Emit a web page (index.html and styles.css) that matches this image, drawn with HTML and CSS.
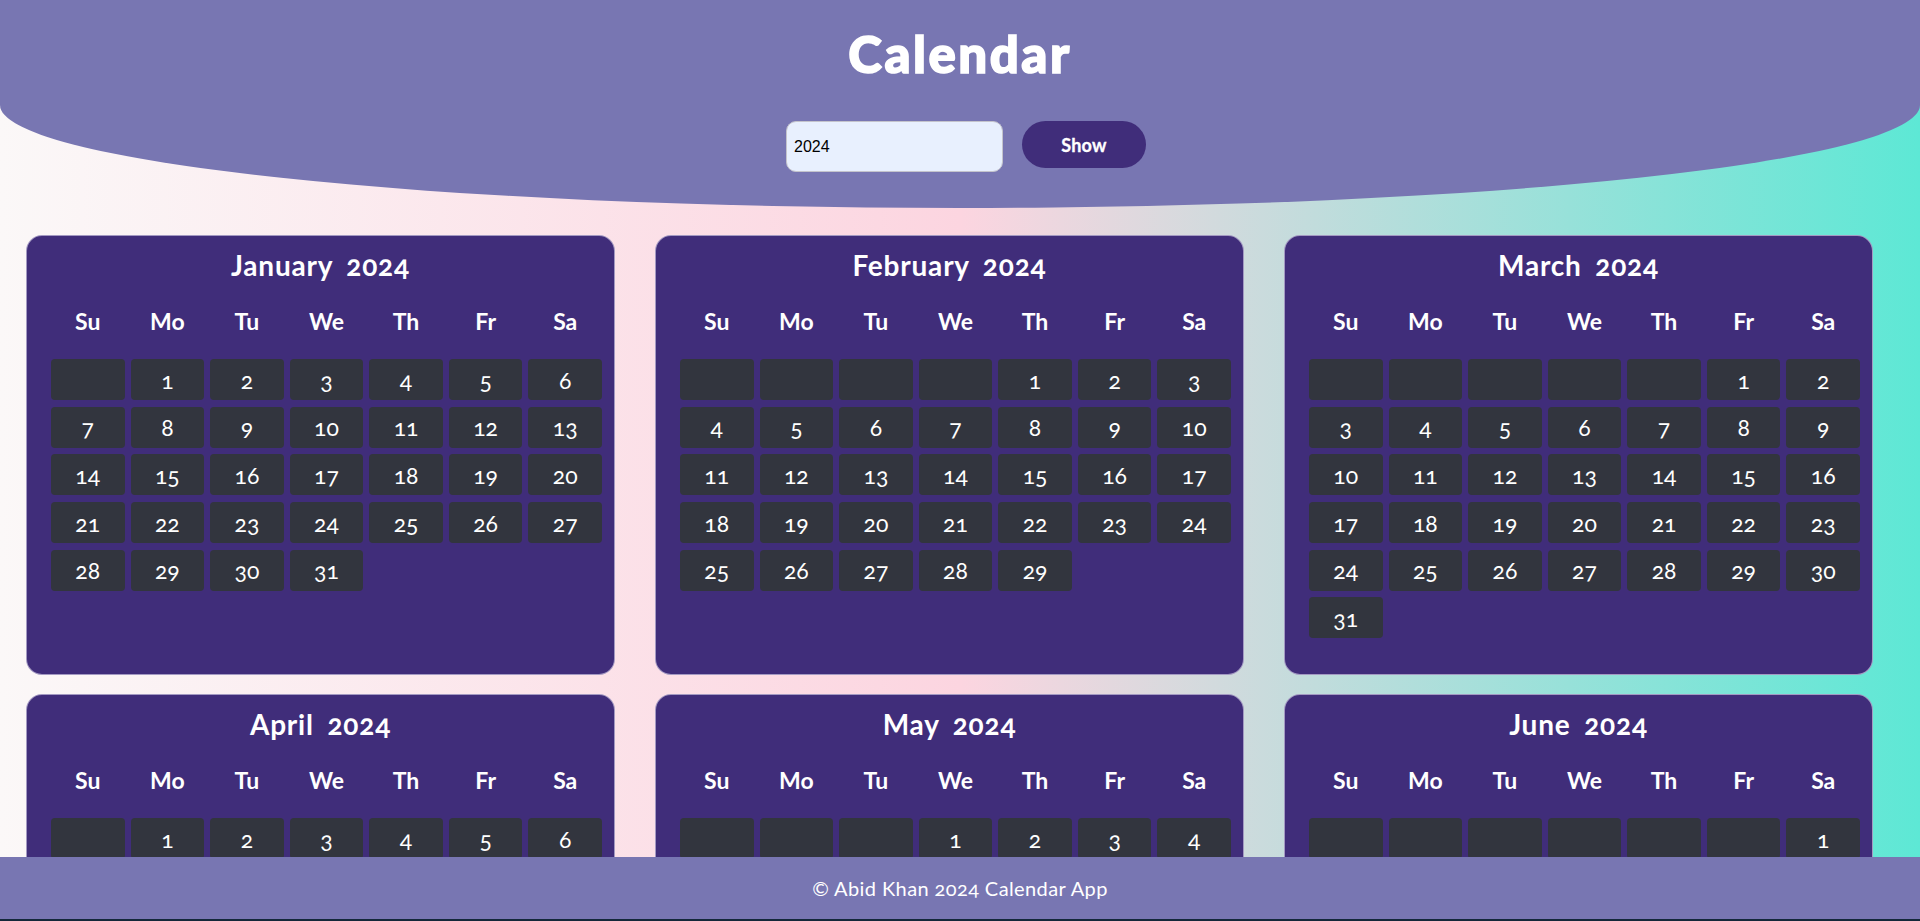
FILE: index.html
```html
<!DOCTYPE html>
<html lang="en">
<head>
<meta charset="UTF-8">
<title>Calendar</title>
<link rel="stylesheet" href="styles.css">
</head>
<body>
<header class="top">
  <h1 class="top-title">Calendar</h1>
  <div class="controls">
    <input class="year-input" id="year" type="number" value="2024">
    <button class="show-btn" id="show" type="button">Show</button>
  </div>
</header>
<main class="months" id="calendars"></main>
<footer class="foot">© Abid Khan 2024 Calendar App</footer>
<script src="script.js"></script>
</body>
</html>
```
FILE: styles.css
```css
html {
  scrollbar-width: none;
}
html::-webkit-scrollbar {
  display: none;
}
body {
  margin: 0;
  font-family: "Lato", "Open Sans", sans-serif;
  color: #fff;
  background: linear-gradient(to right, #fbf8f8 0%, #fcd5e0 50%, #5de8d5 100%);
  min-height: 100vh;
  padding-bottom: 80px;
}
.top {
  background: #7876b2;
  height: 208px;
  box-sizing: border-box;
  padding-top: 24px;
  border-radius: 0 0 50% 50% / 0 0 103px 103px;
  display: flex;
  flex-direction: column;
  align-items: center;
}
.top-title {
  margin: 0;
  font-size: 51px;
  line-height: 60px;
  font-weight: 900;
  letter-spacing: 2.5px;
  -webkit-text-stroke: 1.6px #fff;
}
.controls {
  margin-top: 37px;
  display: flex;
  align-items: flex-start;
  gap: 19px;
  padding-left: 12px;
}
.year-input {
  box-sizing: border-box;
  width: 217px;
  height: 51px;
  border: 1px solid #c4c4cc;
  border-radius: 10px;
  background: #e8f0fe;
  font-family: "Liberation Sans", Arial, sans-serif;
  font-size: 16px;
  color: #000;
  padding: 0 7px;
  outline: none;
  -moz-appearance: textfield;
}
.year-input::-webkit-outer-spin-button,
.year-input::-webkit-inner-spin-button {
  -webkit-appearance: none;
  margin: 0;
}
.show-btn {
  width: 124px;
  height: 47px;
  border: none;
  border-radius: 24px;
  background: #402d7a;
  color: #fff;
  font-family: "Lato", sans-serif;
  font-weight: 700;
  font-size: 18px;
  letter-spacing: 0.3px;
  -webkit-text-stroke: 0.3px #fff;
  cursor: pointer;
}
.months {
  margin-top: 27px;
  padding: 0 47px 0 26px;
  display: grid;
  grid-template-columns: repeat(3, 1fr);
  column-gap: 40px;
  row-gap: 19px;
}
.month {
  background: #402d7a;
  border: 1px solid rgba(205, 200, 225, 0.7);
  border-radius: 16px;
  padding: 14px 0 36px;
}
.month-title {
  margin: 0 0 29px;
  text-align: center;
  font-size: 28px;
  line-height: 30px;
  font-weight: 700;
  letter-spacing: 0.8px;
  font-variant-numeric: oldstyle-nums;
  word-spacing: 6px;
}
.week,
.days {
  margin: 0 12px 0 24px;
  display: grid;
  grid-template-columns: repeat(7, 1fr);
  column-gap: 6px;
}
.week {
  margin-bottom: 26px;
}
.week-day {
  text-align: center;
  font-weight: 700;
  font-size: 23px;
  line-height: 24px;
}
.days {
  grid-auto-rows: 41px;
  row-gap: 6.7px;
}
.day {
  background: #32353e;
  border-radius: 4px;
  display: flex;
  align-items: center;
  justify-content: center;
  font-size: 23px;
  font-variant-numeric: oldstyle-nums;
}
.foot {
  position: fixed;
  left: 0;
  right: 0;
  bottom: 0;
  height: 62px;
  background: #7876b2;
  border-bottom: 2px solid #14283a;
  display: flex;
  align-items: center;
  justify-content: center;
  font-size: 20px;
  letter-spacing: 0.4px;
  font-variant-numeric: oldstyle-nums;
}
```
FILE: script.js
```js
(function () {
  var names = ["January", "February", "March", "April", "May", "June",
    "July", "August", "September", "October", "November", "December"];
  var week = ["Su", "Mo", "Tu", "We", "Th", "Fr", "Sa"];

  function render(year) {
    var box = document.getElementById("calendars");
    var html = "";
    for (var m = 0; m < 12; m++) {
      var first = new Date(year, m, 1).getDay();
      var count = new Date(year, m + 1, 0).getDate();
      html += '<section class="month">';
      html += '<h2 class="month-title">' + names[m] + " " + year + "</h2>";
      html += '<div class="week">';
      for (var w = 0; w < 7; w++) {
        html += '<div class="week-day">' + week[w] + "</div>";
      }
      html += "</div>";
      html += '<div class="days">';
      for (var i = 0; i < first; i++) {
        html += '<div class="day"></div>';
      }
      for (var d = 1; d <= count; d++) {
        html += '<div class="day">' + d + "</div>";
      }
      html += "</div></section>";
    }
    box.innerHTML = html;
  }

  var input = document.getElementById("year");
  document.getElementById("show").addEventListener("click", function () {
    var y = parseInt(input.value, 10);
    if (!isNaN(y)) render(y);
  });
  render(2024);
})();
```
